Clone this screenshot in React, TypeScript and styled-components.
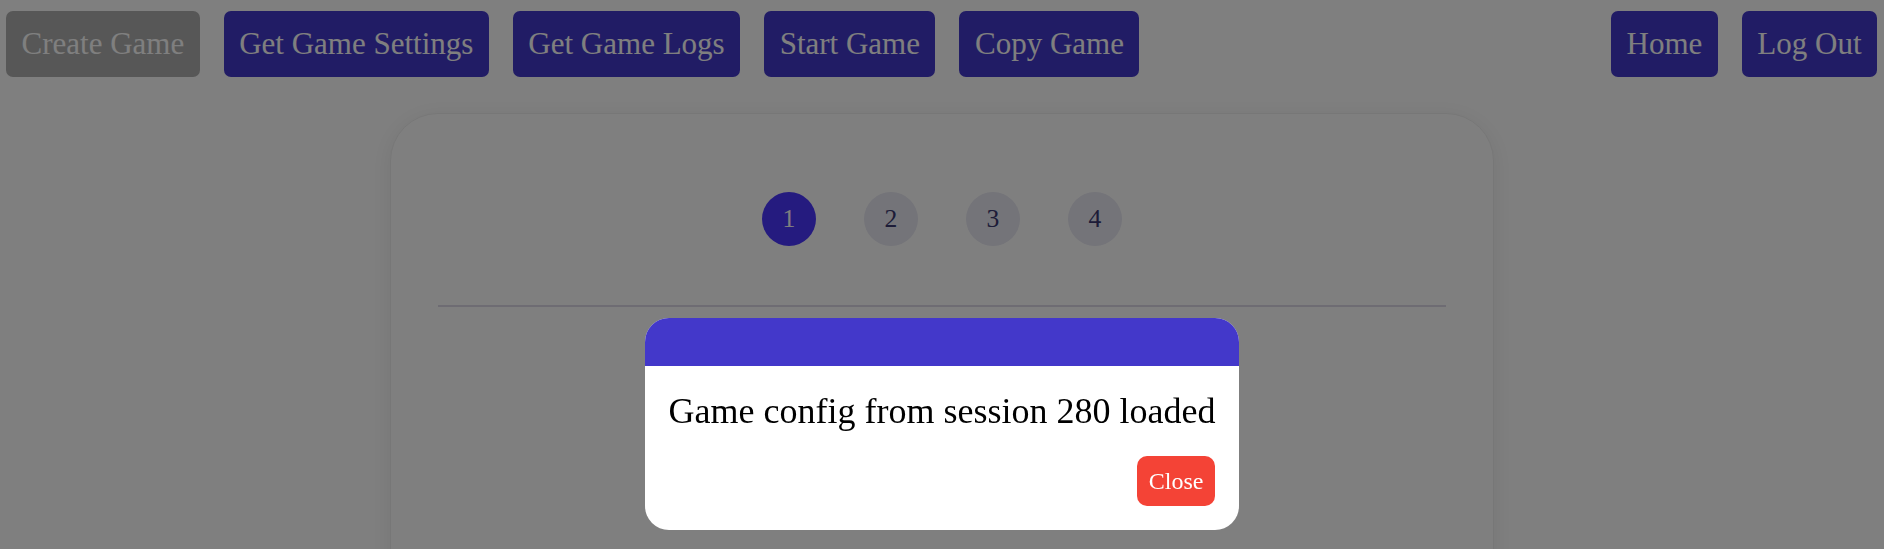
import React from "react";
import styled, { createGlobalStyle } from "styled-components";

const GlobalStyle = createGlobalStyle`
  html, body {
    margin: 0;
    padding: 0;
    overflow: hidden;
    background: #ffffff;
    font-family: "Liberation Serif", "Times New Roman", serif;
  }
  * { box-sizing: border-box; }
`;

const Page = styled.div`
  position: relative;
  min-height: 549px;
`;

const Nav = styled.nav`
  display: flex;
  justify-content: space-between;
  align-items: center;
  padding: 11px 7px 0 6px;
`;

const NavGroup = styled.div`
  display: flex;
  gap: 24px;
`;

const NavButton = styled.button<{ $disabled?: boolean }>`
  font-family: inherit;
  font-size: 31px;
  line-height: normal;
  padding: 15px 15.5px;
  border: none;
  border-radius: 7px;
  background: ${(p) => (p.$disabled ? "#aeaeae" : "#4338ca")};
  color: #ffffff;
  cursor: ${(p) => (p.$disabled ? "default" : "pointer")};
`;

const Card = styled.section`
  width: 1104px;
  height: 640px;
  margin: 36px auto 0;
  padding: 0 47px;
  border: 1px solid #efefef;
  border-radius: 48px;
  background: #ffffff;
  box-shadow: 0 4px 24px rgba(0, 0, 0, 0.08);
`;

const Stepper = styled.div`
  display: flex;
  justify-content: center;
  gap: 48px;
  padding-top: 78px;
  margin-bottom: 59px;
`;

const StepCircle = styled.div<{ $active?: boolean }>`
  width: 54px;
  height: 54px;
  border-radius: 50%;
  display: flex;
  align-items: center;
  justify-content: center;
  font-size: 25.6px;
  background: ${(p) => (p.$active ? "#4a36ff" : "#e8e8f2")};
  color: ${(p) => (p.$active ? "#ffffff" : "#3a3870")};
`;

const Divider = styled.hr`
  margin: 0;
  border: none;
  height: 2px;
  background: #dcd9e6;
`;

const Overlay = styled.div`
  position: fixed;
  inset: 0;
  background: rgba(0, 0, 0, 0.5);
  display: flex;
  justify-content: center;
  align-items: flex-start;
  padding-top: 318px;
`;

const Modal = styled.div`
  width: fit-content;
  background: #ffffff;
  border-radius: 24px;
  overflow: hidden;
`;

const ModalHeader = styled.div`
  height: 48px;
  background: #4338ca;
`;

const ModalBody = styled.div`
  display: flex;
  flex-direction: column;
  gap: 24px;
  padding: 24px;
`;

const Message = styled.p`
  margin: 0;
  font-size: 36px;
  line-height: normal;
  color: #000000;
  white-space: nowrap;
`;

const Actions = styled.div`
  display: flex;
  justify-content: flex-end;
`;

const CloseButton = styled.button`
  font-family: inherit;
  font-size: 24px;
  line-height: normal;
  padding: 11.5px 12px;
  border: none;
  border-radius: 10px;
  background: #f44336;
  color: #ffffff;
  cursor: pointer;
`;

const leftButtons = ["Get Game Settings", "Get Game Logs", "Start Game", "Copy Game"];
const steps = [1, 2, 3, 4];

export default function App() {
  return (
    <>
      <GlobalStyle />
      <Page>
        <Nav>
          <NavGroup>
            <NavButton $disabled disabled>
              Create Game
            </NavButton>
            {leftButtons.map((b) => (
              <NavButton key={b}>{b}</NavButton>
            ))}
          </NavGroup>
          <NavGroup>
            <NavButton>Home</NavButton>
            <NavButton>Log Out</NavButton>
          </NavGroup>
        </Nav>
        <Card>
          <Stepper>
            {steps.map((s) => (
              <StepCircle key={s} $active={s === 1}>
                {s}
              </StepCircle>
            ))}
          </Stepper>
          <Divider />
        </Card>
        <Overlay>
          <Modal>
            <ModalHeader />
            <ModalBody>
              <Message>Game config from session 280 loaded</Message>
              <Actions>
                <CloseButton>Close</CloseButton>
              </Actions>
            </ModalBody>
          </Modal>
        </Overlay>
      </Page>
    </>
  );
}
